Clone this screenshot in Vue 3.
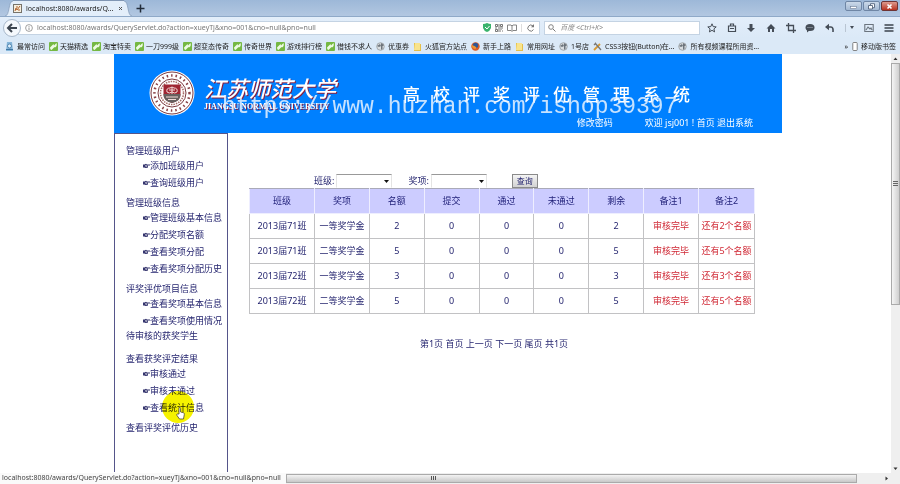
<script setup>
import { ref } from 'vue'

const address = ref('localhost:8080/awards/QueryServlet.do?action=xueyTj&xno=001&cno=null&pno=null')
const keyword = ref('')
const classId = ref('')
const awardId = ref('')

const bookmarks = [
  { icon: 'recent', text: '最常访问' },
  { icon: 'leaf', text: '天猫精选' },
  { icon: 'leaf', text: '淘宝特卖' },
  { icon: 'leaf', text: '一刀999级' },
  { icon: 'leaf', text: '超变态传奇' },
  { icon: 'leaf', text: '传奇世界' },
  { icon: 'leaf', text: '游戏排行榜' },
  { icon: 'leaf', text: '借钱不求人' },
  { icon: 'globe', text: '优惠券' },
  { icon: 'folder', text: '火狐官方站点' },
  { icon: 'fox', text: '新手上路' },
  { icon: 'folder', text: '常用网址' },
  { icon: 'globe', text: '1号店' },
  { icon: 'wrench', text: 'CSS3按钮(Button)在...' },
  { icon: 'globe', text: '所有视频课程所用资...' },
]

const menu = [
  { title: '管理班级用户', items: ['添加班级用户', '查询班级用户'] },
  { title: '管理班级信息', items: ['管理班级基本信息', '分配奖项名额', '查看奖项分配', '查看奖项分配历史'] },
  { title: '评奖评优项目信息', items: ['查看奖项基本信息', '查看奖项使用情况'] },
  { title: '待审核的获奖学生', items: [], tight: true },
  { title: '查看获奖评定结果', items: ['审核通过', '审核未通过', '查看统计信息'], wide: true },
  { title: '查看评奖评优历史', items: [] },
]
const hovered = '查看统计信息'

const title = '高校评奖评优管理系统'.split('')
const columns = ['班级', '奖项', '名额', '提交', '通过', '未通过', '剩余', '备注1', '备注2']
const rows = [
  ['2013届71班', '一等奖学金', '2', '0', '0', '0', '2', '审核完毕', '还有2个名额'],
  ['2013届71班', '二等奖学金', '5', '0', '0', '0', '5', '审核完毕', '还有5个名额'],
  ['2013届72班', '一等奖学金', '3', '0', '0', '0', '3', '审核完毕', '还有3个名额'],
  ['2013届72班', '二等奖学金', '5', '0', '0', '0', '5', '审核完毕', '还有5个名额'],
]
</script>

<template>
  <div class="browser">
    <header class="titlebar">
      <div class="tab">
        <svg class="tab-edge" viewBox="0 0 8 16"><path d="M0 16C5 16 3 1 8 1V16Z" fill="#e3eefa" /><path d="M0 16C5 16 3 1 8 1" fill="none" stroke="#8096b4" stroke-width=".7" /></svg>
        <div class="tab-body">
          <svg width="9" height="9" viewBox="0 0 9 9"><rect x=".5" y=".5" width="8" height="8" fill="#f6efdf" stroke="#77736b" /><path d="M2 7L3 4L4 6L7 2M3 3h2M6 5v2" stroke="#b2622c" fill="none" /></svg>
          <span class="tab-name">localhost:8080/awards/Q...</span>
          <button class="bare" aria-label="关闭标签页"><svg width="7" height="7" viewBox="0 0 7 7"><path d="M2 2l3 3M5 2L2 5" stroke="#555" /></svg></button>
        </div>
        <svg class="tab-edge" viewBox="0 0 8 16"><path d="M8 16C3 16 5 1 0 1V16Z" fill="#e3eefa" /><path d="M8 16C3 16 5 1 0 1" fill="none" stroke="#8096b4" stroke-width=".7" /></svg>
      </div>
      <button class="bare" aria-label="新建标签页"><svg width="9" height="9" viewBox="0 0 9 9"><path d="M4.500 .5v8M.5 4.500h8" stroke="#222c3a" stroke-width="1.500" /></svg></button>
      <div class="window-buttons">
        <button class="win" aria-label="最小化"><svg width="9" height="7" viewBox="0 0 9 7"><rect x="1.500" y="3.500" width="6" height="2" fill="#fff" stroke="#6e7f98" stroke-width=".6" /></svg></button>
        <button class="win" aria-label="还原"><svg width="9" height="7" viewBox="0 0 9 7"><path d="M3.500 2V.7h4v4H6M1.500 2.500h4v3.500h-4z" fill="#fff" stroke="#52637c" stroke-width=".9" /></svg></button>
        <button class="win close" aria-label="关闭"><svg width="9" height="7" viewBox="0 0 9 7"><path d="M2.500 1.500l4 4M6.500 1.500l-4 4" stroke="#fff" stroke-width="1.600" /></svg></button>
      </div>
    </header>

    <div class="navbar">
      <button class="back" aria-label="后退"><svg width="12" height="12" viewBox="0 0 12 12"><path d="M11 6H3M6 2L2 6l4 4" fill="none" stroke="#3d4650" stroke-width="2" /></svg></button>
      <div class="address">
        <svg width="8" height="8" viewBox="0 0 8 8"><circle cx="4" cy="4" r="3.400" fill="none" stroke="#888" stroke-width=".8" /><path d="M4 3.500V6M4 2v.8" stroke="#888" stroke-width=".9" /></svg>
        <input v-model="address" aria-label="网址" />
        <svg width="8" height="9" viewBox="0 0 8 9"><path d="M0 1Q2 1 4 0Q6 1 8 1V5Q7 8 4 9Q1 8 0 5Z" fill="#3ab36c" /><path d="M2 4l2 2 2.500-3" stroke="#fff" fill="none" /></svg>
        <svg width="8" height="8" viewBox="0 0 8 8"><path d="M.5.5h2v2h-2zM5.500.5h2v2h-2zM.5 5.500h2v2h-2zM4 0v3M3 4h5M4 5v3M6 5v1M7 7h1M0 4h2M5 7h1" fill="none" stroke="#555" stroke-width=".8" /></svg>
        <svg width="10" height="8" viewBox="0 0 10 8"><path d="M.5 1h3.500L5 2l1-1h3.500v5.500H6L5 7.500l-1-1H.5zM5 2v5" fill="none" stroke="#777" stroke-width=".9" /></svg>
        <button class="bare reload" aria-label="刷新"><svg width="8" height="8" viewBox="0 0 8 8"><path d="M6.500 5.500A3 3 0 1 1 6 2" fill="none" stroke="#777" /><path d="M7 0v3.200H4Z" fill="#777" /></svg></button>
      </div>
      <div class="search">
        <svg width="8" height="8" viewBox="0 0 8 8"><circle cx="3" cy="3" r="2.300" fill="none" stroke="#777" stroke-width=".9" /><path d="M5 5l2.500 2.500" stroke="#777" /></svg>
        <input v-model="keyword" aria-label="搜索" placeholder="百度 <Ctrl+K>" />
      </div>
      <div class="tools">
        <button class="bare" aria-label="收藏"><svg width="10" height="10" viewBox="0 0 10 10"><path d="M5 .8l1.200 2.800 3 .3-2.300 2 .7 3L5 7.300 2.400 8.900l.7-3-2.300-2 3-.3z" fill="none" stroke="#454d57" /></svg></button>
        <button class="bare" aria-label="书签"><svg width="10" height="10" viewBox="0 0 10 10"><path d="M1.500 3h7v5.500h-7zM3.500 3V1h3v2M3 5.500h4" fill="none" stroke="#454d57" stroke-width="1.200" /></svg></button>
        <button class="bare" aria-label="下载"><svg width="10" height="10" viewBox="0 0 10 10"><path d="M3.500 1h3v4H9L5 9 1 5h2.500z" fill="#454d57" /></svg></button>
        <button class="bare" aria-label="主页"><svg width="10" height="10" viewBox="0 0 10 10"><path d="M5 1l4.500 4.500H8V9H6V6H4v3H2V5.500H.5z" fill="#454d57" /></svg></button>
        <button class="bare" aria-label="截图"><svg width="10" height="10" viewBox="0 0 10 10"><path d="M2.500 0v7.500H10M0 2.500h7.500V10" fill="none" stroke="#454d57" stroke-width="1.300" /></svg></button>
        <button class="bare" aria-label="聊天"><svg width="10" height="10" viewBox="0 0 10 10"><ellipse cx="5" cy="4.500" rx="4.500" ry="3.500" fill="#454d57" /><path d="M2 6v3.500L5 7z" fill="#454d57" /><path d="M2.500 4.500h5" stroke="#aeb8c2" stroke-dasharray="1 1" /></svg></button>
        <button class="bare" aria-label="撤销"><svg width="10" height="10" viewBox="0 0 10 10"><path d="M2 4h4Q8.500 4 8 9" fill="none" stroke="#454d57" stroke-width="1.600" /><path d="M0 4L4 .8v6.400z" fill="#454d57" /></svg></button>
        <button class="bare caret" aria-label="更多撤销"><svg width="6" height="4" viewBox="0 0 6 4"><path d="M1 0h4L3 3z" fill="#454d57" /></svg></button>
        <button class="bare" aria-label="图片"><svg width="10" height="10" viewBox="0 0 10 10"><path d="M.8 1.500h8.400v7H.8zM2 7l2-3 2 2 1-1 1 2" fill="none" stroke="#6b747e" stroke-width="1.100" /></svg></button>
        <button class="bare" aria-label="菜单"><svg width="10" height="10" viewBox="0 0 10 10"><path d="M.5 2h9M.5 5h9M.5 8h9" stroke="#3b434c" stroke-width="1.700" /></svg></button>
      </div>
    </div>

    <nav class="bookmarks">
      <a v-for="mark in bookmarks" :key="mark.text" href="#" class="bookmark" :class="{ snug: mark.icon === 'leaf' }">
        <svg width="9" height="9" viewBox="0 0 9 9">
          <g v-if="mark.icon === 'leaf'"><rect width="9" height="9" rx="1" fill="#75b843" /><path d="M1 5.500L4.500 2 5 3.500 7.500 1Q8.500 4 6 5.500L5.500 5 2.500 8Q1 7.500 1 5.500Z" fill="#eefbe3" /></g>
          <g v-else-if="mark.icon === 'folder'"><path d="M1 1h4l1 1h2v7H1z" fill="#e5bf49" /><path d="M2 1h5v7H1z" fill="#f8e38c" /></g>
          <g v-else-if="mark.icon === 'fox'"><circle cx="4.500" cy="4.500" r="4.200" fill="#d95b25" /><circle cx="4.500" cy="3.500" r="2.700" fill="#2e5695" /><path d="M.5 3l3 1 2 1.500-1 1.500Q1 7 .5 3" fill="#ef9630" /></g>
          <g v-else-if="mark.icon === 'wrench'"><path d="M1 8l6-6" stroke="#d99b32" stroke-width="1.800" /><path d="M2 1l6 7M1 3l2-2" stroke="#777" stroke-width="1.300" /></g>
          <g v-else-if="mark.icon === 'recent'"><path d="M2 0h5l1 9H1z" fill="#86b6da" /><circle cx="4.500" cy="4" r="2" fill="#e3f3ff" stroke="#4177a3" stroke-width=".8" /><path d="M1 7.500h7" stroke="#3f76a3" /></g>
          <g v-else><circle cx="4.500" cy="4.500" r="3.800" fill="#d9dde0" stroke="#8c9296" stroke-width=".7" /><path d="M1 4l3-2 1 2-2 1zM5 1l3 2-2 2 1 1-2 2z" fill="#6d747b" /></g>
        </svg>
        <span>{{ mark.text }}</span>
      </a>
      <button class="bare more" aria-label="更多书签">»</button>
      <a href="#" class="bookmark">
        <svg width="6" height="9" viewBox="0 0 6 9"><rect x=".8" y=".5" width="4.400" height="8" rx=".8" fill="#fff" stroke="#666" stroke-width=".8" /></svg>
        <span>移动版书签</span>
      </a>
    </nav>

    <div class="viewport">
      <div class="page">
        <div class="banner">
          <svg class="crest" viewBox="0 0 46 46">
            <circle cx="23" cy="23" r="22.500" fill="#fff" />
            <circle cx="23" cy="23" r="21" fill="none" stroke="#7b3a40" />
            <circle cx="23" cy="23" r="17.500" fill="none" stroke="#8a4348" stroke-width="2.500" stroke-dasharray="1.500 3" />
            <circle cx="23" cy="23" r="14" fill="#fff" stroke="#7b3a40" />
            <circle cx="23" cy="23" r="11.500" fill="none" stroke="#a56a66" stroke-width="1.500" stroke-dasharray="1.500 1" />
            <path d="M14.500 14.500h17V25Q31 31 23 33Q15 31 14.500 25Z" fill="#9f2633" />
            <path d="M14.500 24h17Q32 31 23 33Q14 31 14.500 24Z" fill="#66605f" />
            <path d="M18 22q-1-4 3-4 2-2 4 0 4 0 3 4-2 2-5 0-3 2-5 0M20 20h6M23 17v7M17 27h12M19 29.500h8" fill="none" stroke="#f3dad8" />
          </svg>
          <div class="school">
            <strong>江苏师范大学</strong>
            <small>JIANGSU NORMAL UNIVERSITY</small>
          </div>
          <div class="banner-right">
            <h1><span v-for="(c, i) in title" :key="i">{{ c }}</span></h1>
            <div class="account">
              <a href="#">修改密码</a>
              <span>欢迎 jsj001 ! <a href="#">首页</a> <a href="#">退出系统</a></span>
            </div>
          </div>
          <div class="watermark">https://www.huzhan.com/ishop39397</div>
        </div>

        <div class="body">
          <aside class="sidebar">
            <section v-for="group in menu" :key="group.title" :class="{ tight: group.tight, wide: group.wide }">
              <h2>{{ group.title }}</h2>
              <ul v-if="group.items.length">
                <li v-for="item in group.items" :key="item">
                  <i v-if="item === hovered" class="halo"></i>
                  <a href="#">
                    <svg width="7" height="6" viewBox="0 0 7 6"><path d="M0 1.500h1.500L3 .8l1 .7h3v1H4.500l.5 1-.5 1.500H2L1.500 4.500H0z" fill="#35356e" /><path d="M2 2.700h2M2.500 3.700h1.500" stroke="#fff" stroke-width=".6" /></svg>{{ item }}
                  </a>
                  <svg v-if="item === hovered" class="hand" viewBox="0 0 9 13"><path d="M3 7V1.500Q3 .5 3.800.5T4.600 1.500V5l3 .8Q8.500 6 8.300 7.500L7.500 12h-4L1 8.500Q.3 7 1.300 7Z" fill="#fff" stroke="#4c4630" stroke-width=".8" /></svg>
                </li>
              </ul>
            </section>
          </aside>

          <main class="content">
            <form class="filters" @submit.prevent>
              <label for="class-select">班级:</label>
              <span class="picker">
                <select id="class-select" v-model="classId"><option value=""></option></select>
                <svg width="5" height="3" viewBox="0 0 5 3"><path d="M0 0h5L2.500 3z" fill="#111" /></svg>
              </span>
              <label for="award-select" class="second">奖项:</label>
              <span class="picker">
                <select id="award-select" v-model="awardId"><option value=""></option></select>
                <svg width="5" height="3" viewBox="0 0 5 3"><path d="M0 0h5L2.500 3z" fill="#111" /></svg>
              </span>
              <button class="query">查询</button>
            </form>
            <table>
              <colgroup>
                <col class="c-class" /><col v-for="n in 7" :key="n" /><col class="c-note" />
              </colgroup>
              <thead><tr><th v-for="c in columns" :key="c">{{ c }}</th></tr></thead>
              <tbody>
                <tr v-for="(row, r) in rows" :key="r">
                  <td v-for="(cell, i) in row" :key="i" :class="{ note: i > 6 }">{{ cell }}</td>
                </tr>
              </tbody>
            </table>
            <div class="pager">第1页 <a href="#">首页</a> <a href="#">上一页</a> <a href="#">下一页</a> <a href="#">尾页</a> 共1页</div>
          </main>
        </div>
      </div>
      <div class="vscroll">
        <svg viewBox="0 0 9 9"><path d="M2.500 6h4L4.500 3.500z" fill="#333" /></svg>
        <div class="vthumb"><svg width="5" height="6" viewBox="0 0 5 6"><path d="M0 .5h5M0 2.500h5M0 4.500h5" stroke="#666" /></svg></div>
        <div class="vtrack"></div>
        <svg viewBox="0 0 9 9"><path d="M2.500 3.500h4L4.500 6z" fill="#333" /></svg>
      </div>
    </div>

    <footer class="bottom">
      <span class="status">localhost:8080/awards/QueryServlet.do?action=xueyTj&amp;xno=001&amp;cno=null&amp;pno=null</span>
      <div class="hthumb"><svg width="6" height="5" viewBox="0 0 6 5"><path d="M.5 0v4M2.500 0v4M4.500 0v4" stroke="#555" /></svg></div>
      <svg class="harrow" viewBox="0 0 9 9"><path d="M3.500 2.500v4L6 4.500z" fill="#333" /></svg>
    </footer>
  </div>
</template>

<style>
body { margin: 0; }
</style>

<style scoped>
.browser {
  min-height: 100vh;
  display: flex;
  flex-direction: column;
  font-family: "Noto Sans", "Noto Sans CJK SC", sans-serif;
  font-size: 7px;
  color: #222;
  background: #fff;
}
* { box-sizing: border-box; }
svg { flex: none; display: block; }
a { color: inherit; text-decoration: none; }
.bare { border: 0; padding: 0; background: none; font: inherit; color: inherit; display: flex; align-items: center; }
input { border: 0; padding: 0; min-width: 0; flex: 1; background: none; font: inherit; color: #777; outline: 0; }

.titlebar {
  height: 17px;
  display: flex;
  align-items: center;
  gap: 4px;
  padding: 0 2px 0 5px;
  background: linear-gradient(#9db8d8, #b2c7e1);
  border-bottom: 1px solid #8fa9c8;
}
.tab { display: flex; height: 16px; align-self: flex-end; }
.tab-edge { width: 8px; height: 16px; }
.tab-body { display: flex; align-items: center; gap: 4px; background: #e3eefa; border-top: 1px solid #8096b4; }
.tab-name { white-space: nowrap; }
.window-buttons { margin-left: auto; align-self: flex-start; display: flex; gap: 1px; padding-top: 1px; }
.win { width: 17px; height: 10px; padding: 0; display: flex; align-items: center; justify-content: center; border: 1px solid #6f86a5; border-radius: 2px; background: linear-gradient(#cbd9e9, #a4b9d3); }
.win.close { background: linear-gradient(#dd9a8d, #b8321f); border-color: #6e3434; }

.navbar { height: 21px; display: flex; align-items: center; padding: 0 6px 0 3px; background: linear-gradient(#e3eefa, #dbe9f7); }
.back { width: 18px; height: 18px; padding: 0; display: flex; align-items: center; justify-content: center; border: 1px solid #a8b8ca; border-radius: 50%; background: #f5f9fd; z-index: 1; }
.address { flex: 525; height: 14px; margin-left: -3px; padding: 0 4px 0 6px; display: flex; align-items: center; gap: 4px; background: #fff; border: 1px solid #c4d3e3; }
.reload { padding-left: 5px; border-left: 1px solid #ddd; }
.search { flex: 152; height: 14px; margin-left: 4px; padding: 0 3px; display: flex; align-items: center; gap: 4px; background: #fff; border: 1px solid #c4d3e3; }
.search input::placeholder { color: #888; font-style: italic; opacity: 1; }
.tools { width: 194px; padding-left: 7px; display: flex; align-items: center; justify-content: space-between; }
.caret { border-left: 1px solid #b9c5d2; height: 8px; padding-left: 3px; }

.bookmarks { height: 16px; display: flex; align-items: center; gap: 4px; padding: 0 4px 0 5px; background: #dbe9f7; white-space: nowrap; }
.bookmark { display: flex; align-items: center; gap: 3px; }
.bookmark.snug { gap: 2px; }
.more { margin-left: auto; }

.viewport { flex: 1; display: flex; }
.page { flex: 1; display: flex; flex-direction: column; padding: 0 109px 1px 114px; }
.banner { position: relative; height: 79px; display: flex; align-items: flex-start; padding: 16px 29px 0 35px; background: #0080ff; color: #fff; }
.crest { width: 46px; height: 46px; }
.school { margin: 4px 0 0 9px; width: 132px; display: flex; flex-direction: column; gap: 2px; white-space: nowrap; text-shadow: 1px 1px 0 #8c1c3c; }
.school strong { font: italic 500 22px/26px "Noto Sans CJK SC", sans-serif; }
.school small { font: 700 8px/9px "Liberation Serif", serif; }
.banner-right { flex: 1; margin-left: 67px; padding-top: 12px; display: flex; flex-direction: column; }
h1 { margin: 0; display: flex; gap: 13px; font: 500 17px/24px "Noto Sans CJK SC", sans-serif; }
.account { display: flex; justify-content: flex-end; gap: 32px; padding-top: 10px; font-size: 9px; line-height: 14px; white-space: nowrap; }
.watermark { position: absolute; left: 108px; top: 39px; font: 23px/28px "Liberation Mono", monospace; color: #eaf4ff; opacity: 0.85; white-space: nowrap; }

.body { flex: 1; display: flex; font-size: 9px; color: #25256f; }
.sidebar { width: 114px; padding: 5px 0 38px 11px; border: 1px solid #55558a; border-bottom: 0; white-space: nowrap; }
.sidebar section { padding-top: 5px; }
.sidebar .tight { padding-top: 0; }
.sidebar .wide { padding-top: 10px; }
h2 { margin: 0; font-size: 9px; line-height: 13px; font-weight: 400; }
ul { margin: 0; padding: 0 0 0 17px; list-style: none; }
li { position: relative; line-height: 17px; height: 17px; }
li a { display: flex; align-items: center; }
.halo { position: absolute; left: 19px; top: -8px; width: 32px; height: 32px; border-radius: 50%; background: #f6f200; mix-blend-mode: multiply; }
.hand { position: absolute; left: 33px; top: 8px; width: 9px; height: 13px; }

.content { flex: 1; padding: 40px 27px 0 21px; }
.filters { display: flex; align-items: center; height: 15px; padding-left: 65px; }
.picker { position: relative; width: 56px; height: 14px; margin-left: 2px; }
.picker select { appearance: none; width: 100%; height: 100%; padding: 0; border: 1px solid #e4e4e4; border-top-color: #999; border-bottom-color: #fff; background: #fff; font: inherit; display: block; }
.picker svg { position: absolute; right: 3px; top: 6px; pointer-events: none; }
.second { margin-left: 16px; }
.query { width: 26px; height: 14px; margin-left: 25px; padding: 0; border: 1px solid #8a8a8a; background: linear-gradient(#f4f4f4, #d2d2d2); color: #25256f; font: inherit; font-size: 8px; line-height: 10px; }
table { width: 100%; table-layout: fixed; border-collapse: collapse; border: 1px solid #aaaab0; }
.c-class { width: 65px; }
.c-note { width: 56px; }
th, td { height: 25px; padding: 0; border: 1px solid #c2c2c4; text-align: center; font-weight: 400; line-height: 14px; white-space: nowrap; }
th { background: #ccccff; border-color: #aaaab8 #eeeeff #eeeeff; color: #1f1f78; }
.note { color: #d02a36; }
.pager { padding: 23px 16px 0 0; text-align: center; line-height: 14px; }

.vscroll { width: 9px; display: flex; flex-direction: column; background: #efefef; }
.vthumb { flex: 241; display: flex; align-items: center; justify-content: center; border: 1px solid #aaa; background: linear-gradient(90deg, #f5f5f5, #cfcfcf); }
.vtrack { flex: 159; }
.bottom { height: 11px; display: flex; align-items: center; background: #efefef; }
.status { width: 286px; height: 11px; padding-left: 2px; line-height: 10px; background: #fafafa; color: #444; white-space: nowrap; }
.hthumb { flex: 1; height: 9px; display: flex; align-items: center; justify-content: center; border: 1px solid #aaa; background: linear-gradient(#f3f3f3, #c8c8c8); }
.hthumb svg { margin-right: 276px; }
.harrow { width: 9px; height: 9px; margin: 0 9px 0 25px; }
</style>
